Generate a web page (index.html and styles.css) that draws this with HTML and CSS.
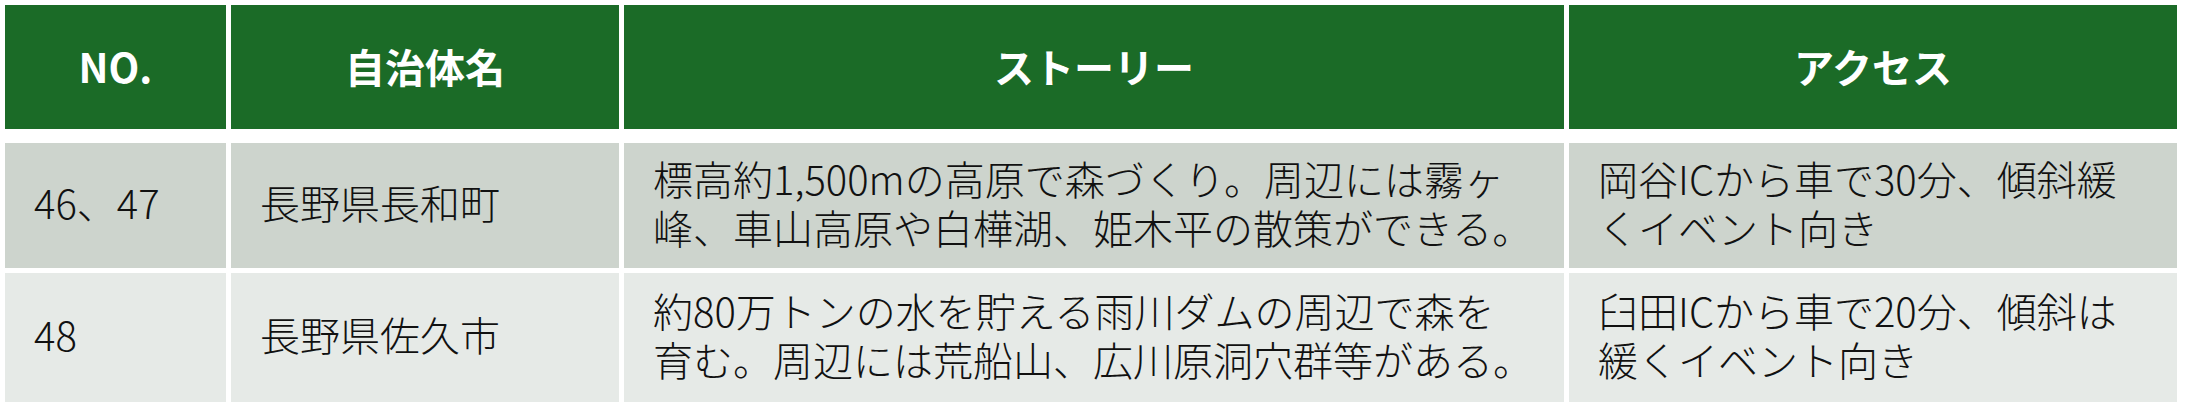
FILE: index.html
```html
<!DOCTYPE html>
<html lang="ja">
<head>
<meta charset="utf-8">
<link rel="stylesheet" href="styles.css">
</head>
<body>
<div class="table">
  <div class="th">NO.</div>
  <div class="th">自治体名</div>
  <div class="th">ストーリー</div>
  <div class="th">アクセス</div>

  <div class="td r1">46、47</div>
  <div class="td r1">長野県長和町</div>
  <div class="td r1">標高約1,500mの高原で森づくり。周辺には霧ヶ<br>峰、車山高原や白樺湖、姫木平の散策ができる。</div>
  <div class="td r1">岡谷ICから車で30分、傾斜緩<br>くイベント向き</div>

  <div class="td r2">48</div>
  <div class="td r2">長野県佐久市</div>
  <div class="td r2">約80万トンの水を貯える雨川ダムの周辺で森を<br>育む。周辺には荒船山、広川原洞穴群等がある。</div>
  <div class="td r2">臼田ICから車で20分、傾斜は<br>緩くイベント向き</div>
</div>
</body>
</html>
```

FILE: styles.css
```css
html, body {
  margin: 0;
  padding: 0;
  background: #ffffff;
}

.table {
  display: grid;
  grid-template-columns: 221px 388px 940px 608px;
  grid-template-rows: 133px 125px 129px;
  column-gap: 5px;
  row-gap: 5px;
  padding: 5px 5px 0 5px;
  font-family: "Noto Sans CJK JP", sans-serif;
  font-size: 40px;
  line-height: 49px;
}

.th {
  background: #1b6b27;
  color: #ffffff;
  font-weight: 700;
  display: flex;
  align-items: center;
  justify-content: center;
  margin-bottom: 9px;
  padding-bottom: 2px;
}

.td {
  color: #111111;
  font-weight: 300;
  display: flex;
  align-items: center;
  padding: 0 16px 6px 29px;
}

.r1 {
  background: #cdd4cd;
}

.r2 {
  background: #e6eae7;
}
```
